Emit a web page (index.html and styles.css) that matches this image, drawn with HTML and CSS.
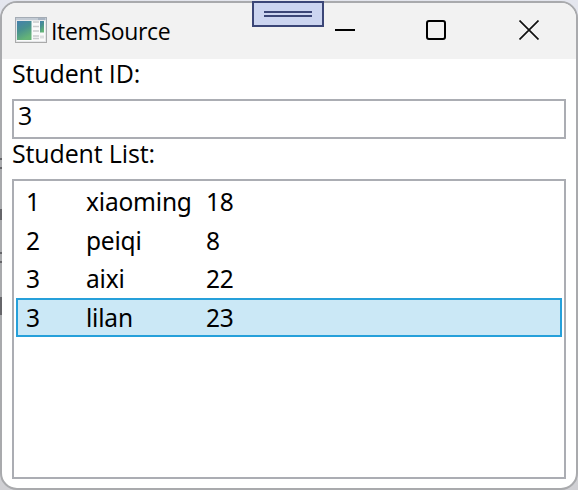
FILE: index.html
```html
<!DOCTYPE html>
<html lang="en">
<head>
<meta charset="utf-8">
<title>ItemSource</title>
<link rel="stylesheet" href="styles.css">
</head>
<body>
<div class="window">
  <header class="titlebar">
    <svg class="app-icon" width="32" height="26" viewBox="0 0 32 26">
      <defs>
        <linearGradient id="pane" x1="0" y1="0" x2="0.4" y2="1"><stop offset="0" stop-color="#4480ad"/><stop offset="0.5" stop-color="#48918f"/><stop offset="1" stop-color="#65b477"/></linearGradient>
        <linearGradient id="frame" x1="0" y1="0" x2="0" y2="1"><stop offset="0" stop-color="#a4acb5"/><stop offset="1" stop-color="#aaa"/></linearGradient>
      </defs>
      <rect x="0.5" y="0.5" width="31" height="25" fill="#e5e7e9" stroke="url(#frame)"/>
      <path d="M1 2H31" stroke="#c3cbd4" stroke-width="2"/>
      <path d="M23 2H30" stroke="#8f9eb0"/>
      <rect x="2" y="4" width="28" height="20" fill="#fafafa"/>
      <rect x="2" y="4" width="14.5" height="19" fill="url(#pane)"/>
      <path d="M18 5H24M18 9.5H24M18 14H24M18 19H24M18 21.5H24" stroke="#c9cbcc" stroke-width="1.4"/>
      <rect x="25" y="4" width="4" height="11.5" fill="url(#pane)"/>
      <path d="M25 20H29" stroke="#dddfe0" stroke-width="3"/>
    </svg>
    <h1 class="title">ItemSource</h1>
    <div class="controls">
      <svg width="20" height="20" viewBox="0 0 20 20"><path d="M0 10H20" stroke="#000" stroke-width="2"/></svg>
      <svg width="20" height="20" viewBox="0 0 20 20"><rect x="1" y="1" width="18" height="18" rx="2" fill="none" stroke="#000" stroke-width="2"/></svg>
      <svg width="20" height="20" viewBox="0 0 20 20"><path d="M0.5 0.5L19.5 19.5M19.5 0.5L0.5 19.5" stroke="#111" stroke-width="1.7"/></svg>
    </div>
  </header>
  <main class="content">
    <div class="label">Student ID:</div>
    <div class="textbox">3</div>
    <div class="label">Student List:</div>
    <div class="list">
      <div class="row"><span>1</span><span>xiaoming</span><span>18</span></div>
      <div class="row"><span>2</span><span>peiqi</span><span>8</span></div>
      <div class="row"><span>3</span><span>aixi</span><span>22</span></div>
      <div class="row selected"><span>3</span><span>lilan</span><span>23</span></div>
    </div>
  </main>
</div>
<div class="debug-handle"><i></i><i></i></div>
<div class="behind"><i class="dash d1"></i><i class="dash d2"></i><i class="dot"></i><i class="dash d3"></i><i class="dash d4"></i><i class="block"></i></div>
</body>
</html>
```
FILE: styles.css
```css
* { box-sizing: border-box; }
body {
  margin: 0;
  width: 578px;
  height: 490px;
  padding-top: 1px;
  overflow: hidden;
  background: linear-gradient(#e4e6ee, #d0d0d4);
  color: #000;
  font: 25px/32px "Open Sans", "Noto Sans", sans-serif;
  letter-spacing: -0.15px;
}
.window {
  height: 489px;
  border: 2px solid #a9aaad;
  border-radius: 17px;
  background: #fff;
  overflow: hidden;
}
.titlebar {
  display: flex;
  align-items: center;
  height: 56px;
  padding: 0 37px 0 13px;
  background: #f2f2f2;
}
.app-icon { flex: none; margin-top: -2px; }
.title {
  margin: 0 0 0 4px;
  font-size: 23px;
  font-weight: 400;
  letter-spacing: -0.35px;
}
.controls {
  display: flex;
  gap: 71px;
  margin: -2px 0 0 auto;
}
.controls svg:nth-child(3) { margin-left: 2px; }
.content { padding: 0 10px; }
.label { height: 40px; line-height: 29px; white-space: nowrap; }
.textbox {
  height: 40px;
  padding: 0 4px;
  border: 2px solid #abadb3;
  line-height: 29px;
}
.list {
  height: 300px;
  padding: 1px 2px;
  border: 2px solid #abadb3;
  display: grid;
  grid-template-rows: 39px 38px 39px 39px;
}
.row {
  display: grid;
  grid-template-columns: 60px 120px 1fr;
  padding: 2px 8px;
  border: 2px solid transparent;
  font: 24.5px/31px "Noto Sans", sans-serif;
  letter-spacing: -0.2px;
}
.selected { background: #cbe8f6; border-color: #26a0da; }
.debug-handle {
  position: absolute;
  left: 252px;
  top: 1px;
  width: 72px;
  height: 26px;
  padding: 8px 10px;
  border: 2px solid #3b4677;
  background: #ccd5f0;
}
.debug-handle i { display: block; height: 2px; margin-bottom: 2px; background: #3b4677; }
.behind i { position: absolute; left: 0; width: 2px; background: #66666a; }
.dash { height: 2px; }
.d1 { top: 158px; }
.d2 { top: 167px; }
.dot { top: 209px; height: 11px; }
.d3 { top: 252px; }
.d4 { top: 261px; }
.block { top: 297px; height: 18px; }
```
